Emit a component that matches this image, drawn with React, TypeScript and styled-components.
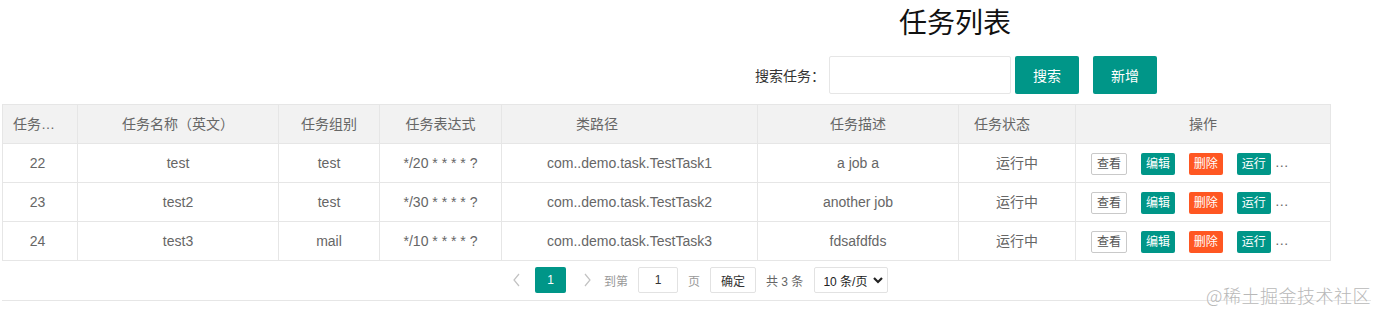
import styled, { createGlobalStyle } from 'styled-components';

type Job = {
  id: number;
  name: string;
  group: string;
  cron: string;
  className: string;
  desc: string;
  status: string;
};

const jobs: Job[] = [
  { id: 22, name: 'test', group: 'test', cron: '*/20 * * * * ?', className: 'com..demo.task.TestTask1', desc: 'a job a', status: '运行中' },
  { id: 23, name: 'test2', group: 'test', cron: '*/30 * * * * ?', className: 'com..demo.task.TestTask2', desc: 'another job', status: '运行中' },
  { id: 24, name: 'test3', group: 'mail', cron: '*/10 * * * * ?', className: 'com..demo.task.TestTask3', desc: 'fdsafdfds', status: '运行中' },
];

// column widths incl. right border, cellWidth = fixed header cell (layui style)
const columns = [
  { title: '任务编号', width: 75 },
  { title: '任务名称（英文）', width: 201 },
  { title: '任务组别', width: 101 },
  { title: '任务表达式', width: 122 },
  { title: '类路径', width: 256, cellWidth: 190 },
  { title: '任务描述', width: 201 },
  { title: '任务状态', width: 117, cellWidth: 86 },
  { title: '操作', width: 255 },
];

const GlobalStyle = createGlobalStyle`
  html, body {
    margin: 0;
    padding: 0;
    background: #fff;
    overflow: hidden;
  }
  body {
    font-family: "Liberation Sans", "Noto Sans CJK SC", sans-serif;
    font-size: 14px;
    color: #333;
  }
  * {
    box-sizing: border-box;
  }
`;

const Page = styled.div`
  position: relative;
  width: 1377px;
  height: 310px;
  padding-left: 2px;
`;

const Title = styled.h2`
  margin: 0 0 0 897px;
  height: 48px;
  line-height: 48px;
  font-size: 28px;
  font-weight: normal;
  color: #111;
`;

const SearchRow = styled.div`
  display: flex;
  align-items: center;
  height: 38px;
  margin: 8px 0 0 753px;
`;

const Label = styled.label`
  font-size: 14px;
  color: #333;
  margin-right: 4px;
`;

const SearchInput = styled.input`
  width: 182px;
  height: 38px;
  border: 1px solid #e6e6e6;
  border-radius: 2px;
  outline: none;
  padding: 0 10px;
`;

const Button = styled.button<{ $gap: number }>`
  height: 38px;
  padding: 0 18px;
  margin-left: ${(p) => p.$gap}px;
  border: none;
  border-radius: 2px;
  background: #009688;
  color: #fff;
  font-family: inherit;
  font-size: 14px;
  cursor: pointer;
`;

const TableView = styled.div`
  margin-top: 10px;
  width: 1369px;
`;

const Table = styled.table`
  width: 1329px;
  table-layout: fixed;
  border-collapse: separate;
  border-spacing: 0;
  border-left: 1px solid #e6e6e6;
  border-top: 1px solid #e6e6e6;
`;

const HeadRow = styled.tr`
  background: #f2f2f2;
`;

const Th = styled.th<{ $width: number }>`
  width: ${(p) => p.$width}px;
  height: 39px;
  padding: 0;
  border-right: 1px solid #e6e6e6;
  border-bottom: 1px solid #e6e6e6;
  font-weight: normal;
  color: #666;
  text-align: left;
`;

const Td = styled.td`
  height: 39px;
  padding: 0;
  border-right: 1px solid #e6e6e6;
  border-bottom: 1px solid #e6e6e6;
  color: #666;
`;

const Cell = styled.div<{ $width?: number; $padLeft?: number; $padRight?: number }>`
  width: ${(p) => (p.$width ? `${p.$width}px` : 'auto')};
  padding: 0 ${(p) => p.$padRight ?? 15}px 0 ${(p) => p.$padLeft ?? 15}px;
  line-height: 28px;
  text-align: center;
  white-space: nowrap;
  overflow: hidden;
  text-overflow: ellipsis;
`;

const ActionCell = styled.div`
  padding: 0 15px;
  line-height: 22px;
  text-align: left;
  white-space: nowrap;
  overflow: hidden;
  text-overflow: ellipsis;
`;

const tones = {
  primary: { bg: '#fff', color: '#555', border: '#c9c9c9' },
  normal: { bg: '#009688', color: '#fff', border: 'transparent' },
  danger: { bg: '#ff5722', color: '#fff', border: 'transparent' },
};

const SmallBtn = styled.span<{ $tone: keyof typeof tones; $first?: boolean }>`
  display: inline-block;
  height: 22px;
  line-height: ${(p) => (p.$tone === 'primary' ? 20 : 22)}px;
  padding: 0 5px;
  margin-left: ${(p) => (p.$first ? 0 : 10)}px;
  font-size: 12px;
  vertical-align: middle;
  border-radius: 2px;
  background: ${(p) => tones[p.$tone].bg};
  color: ${(p) => tones[p.$tone].color};
  border: ${(p) => (p.$tone === 'primary' ? `1px solid ${tones.primary.border}` : 'none')};
`;

const Pager = styled.div`
  display: flex;
  align-items: center;
  height: 40px;
  padding: 0 0 1px 510px;
  border-bottom: 1px solid #e6e6e6;
  font-size: 12px;
`;

const Arrow = styled.svg<{ $gap: number }>`
  margin-left: ${(p) => p.$gap}px;
  flex: none;
`;

const Current = styled.span`
  width: 31px;
  height: 26px;
  margin-left: 13px;
  line-height: 26px;
  text-align: center;
  border-radius: 2px;
  background: #009688;
  color: #fff;
`;

const PagerText = styled.span<{ $gap: number; $color?: string }>`
  margin-left: ${(p) => p.$gap}px;
  color: ${(p) => p.$color ?? '#999'};
`;

const SkipInput = styled.input`
  width: 40px;
  height: 26px;
  margin-left: 10px;
  border: 1px solid #e2e2e2;
  border-radius: 2px;
  text-align: center;
  font-family: inherit;
  font-size: 12px;
  color: #333;
  outline: none;
`;

const SkipButton = styled.button`
  height: 26px;
  width: 46px;
  margin-left: 10px;
  padding: 0;
  border: 1px solid #e2e2e2;
  border-radius: 2px;
  background: #fff;
  font-family: inherit;
  font-size: 12px;
  color: #333;
`;

const LimitSelect = styled.div`
  display: flex;
  align-items: center;
  justify-content: space-between;
  width: 74px;
  height: 26px;
  margin-left: 11px;
  padding: 0 3px 0 8px;
  border: 1px solid #e2e2e2;
  border-radius: 2px;
  color: #222;
`;

const Watermark = styled.div`
  position: absolute;
  right: 6px;
  top: 282px;
  font-family: "Noto Sans CJK SC", sans-serif;
  font-size: 18px;
  font-weight: 300;
  color: #b8b8b8;
  letter-spacing: 0.5px;
  text-shadow: 0 0 2px #fff;
`;

const Chevron = ({ dir, gap }: { dir: 'left' | 'right'; gap: number }) => (
  <Arrow $gap={gap} width="10" height="14" viewBox="0 0 10 14">
    <polyline
      points={dir === 'left' ? '7,1 2,7 7,13' : '3,1 8,7 3,13'}
      fill="none"
      stroke="#c2c2c2"
      strokeWidth="1.2"
    />
  </Arrow>
);

function App() {
  return (
    <Page>
      <GlobalStyle />
      <Title>任务列表</Title>
      <SearchRow>
        <Label>搜索任务：</Label>
        <SearchInput />
        <Button $gap={4}>搜索</Button>
        <Button $gap={14}>新增</Button>
      </SearchRow>

      <TableView>
        <Table>
          <thead>
            <HeadRow>
              {columns.map((c, i) => (
                <Th key={c.title} $width={c.width}>
                  <Cell $width={c.cellWidth} $padLeft={i === 0 ? 10 : 15} $padRight={i === 0 ? 10 : 15}>
                    {c.title}
                  </Cell>
                </Th>
              ))}
            </HeadRow>
          </thead>
          <tbody>
            {jobs.map((job) => (
              <tr key={job.id}>
                <Td><Cell $padLeft={10}>{job.id}</Cell></Td>
                <Td><Cell>{job.name}</Cell></Td>
                <Td><Cell>{job.group}</Cell></Td>
                <Td><Cell>{job.cron}</Cell></Td>
                <Td><Cell>{job.className}</Cell></Td>
                <Td><Cell>{job.desc}</Cell></Td>
                <Td><Cell>{job.status}</Cell></Td>
                <Td>
                  <ActionCell>
                    <SmallBtn $tone="primary" $first>查看</SmallBtn>{' '}
                    <SmallBtn $tone="normal">编辑</SmallBtn>{' '}
                    <SmallBtn $tone="danger">删除</SmallBtn>{' '}
                    <SmallBtn $tone="normal">运行</SmallBtn>{' '}
                    <SmallBtn $tone="normal">暂停</SmallBtn>
                  </ActionCell>
                </Td>
              </tr>
            ))}
          </tbody>
        </Table>

        <Pager>
          <Chevron dir="left" gap={0} />
          <Current>1</Current>
          <Chevron dir="right" gap={16} />
          <PagerText $gap={12}>到第</PagerText>
          <SkipInput defaultValue="1" />
          <PagerText $gap={10}>页</PagerText>
          <SkipButton>确定</SkipButton>
          <PagerText $gap={10} $color="#666">共 3 条</PagerText>
          <LimitSelect>
            <span>10 条/页</span>
            <svg width="12" height="12" viewBox="0 0 12 12">
              <polyline points="2,4 6,8 10,4" fill="none" stroke="#222" strokeWidth="2.2" />
            </svg>
          </LimitSelect>
        </Pager>
      </TableView>

      <Watermark>@稀土掘金技术社区</Watermark>
    </Page>
  );
}

export default App;
